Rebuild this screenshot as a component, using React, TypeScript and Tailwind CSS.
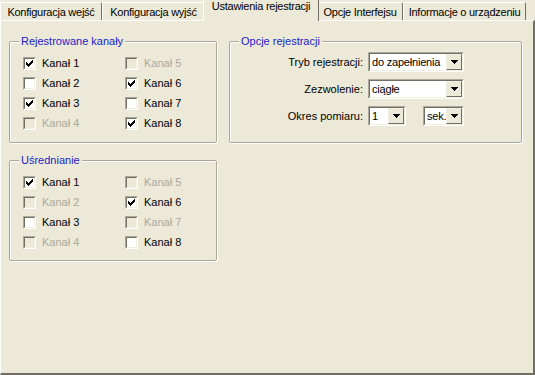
import React from 'react';

type Item = { label: string; checked?: boolean; disabled?: boolean };

const tabs = [
  { label: 'Konfiguracja wejść', w: 'w-[102px]' },
  { label: 'Konfiguracja wyjść', w: 'w-[103px]' },
  { label: 'Ustawienia rejestracji', w: 'w-[110px]', active: true },
  { label: 'Opcje Interfejsu', w: 'w-[86px]' },
  { label: 'Informacje o urządzeniu', w: 'w-[123px]' },
];

const recorded: Item[] = [
  { label: 'Kanał 1', checked: true },
  { label: 'Kanał 2' },
  { label: 'Kanał 3', checked: true },
  { label: 'Kanał 4', disabled: true },
  { label: 'Kanał 5', disabled: true },
  { label: 'Kanał 6', checked: true },
  { label: 'Kanał 7' },
  { label: 'Kanał 8', checked: true },
];

const averaging: Item[] = [
  { label: 'Kanał 1', checked: true },
  { label: 'Kanał 2', disabled: true },
  { label: 'Kanał 3' },
  { label: 'Kanał 4', disabled: true },
  { label: 'Kanał 5', disabled: true },
  { label: 'Kanał 6', checked: true },
  { label: 'Kanał 7', disabled: true },
  { label: 'Kanał 8' },
];

function CheckMark() {
  // classic 7x7 pixel check
  const cols = [2, 3, 4, 3, 2, 1, 0];
  return (
    <svg width="7" height="7" viewBox="0 0 7 7" shapeRendering="crispEdges">
      {cols.map((y, x) => (
        <rect key={x} x={x} y={y} width="1" height="3" fill="#000" />
      ))}
    </svg>
  );
}

function Check({ item }: { item: Item }) {
  return (
    <div className="flex items-center h-[20px]">
      <div className="w-[13px] h-[13px] border border-t-[#aca899] border-l-[#aca899] border-r-white border-b-white">
        <div className={`w-full h-full border border-t-[#716f64] border-l-[#716f64] border-r-[#f1efe2] border-b-[#f1efe2] flex items-center justify-center ${item.disabled ? 'bg-[#ece9d8]' : 'bg-white'}`}>
          {item.checked && <CheckMark />}
        </div>
      </div>
      <span className={`ml-[6px] whitespace-nowrap ${item.disabled ? 'text-[#aca899]' : 'text-black'}`}>{item.label}</span>
    </div>
  );
}

function Group({ title, className, children }: { title: string; className: string; children: React.ReactNode }) {
  return (
    <div className={`relative border border-[#aca899] shadow-[1px_1px_0_#fff,inset_1px_1px_0_#fff] rounded-[2px] ${className}`}>
      <span className="absolute top-[-7px] left-[9px] px-[2px] bg-[#ece9d8] text-[#1c1cc8] whitespace-nowrap leading-[13px]">{title}</span>
      {children}
    </div>
  );
}

function Checks({ items }: { items: Item[] }) {
  return (
    <div className="grid grid-flow-col grid-rows-4 grid-cols-[102px_90px] pl-[13px] pt-[11px]">
      {items.map((it, i) => <Check key={i} item={it} />)}
    </div>
  );
}

function Combo({ value, w }: { value: string; w: string }) {
  return (
    <div className={`${w} h-[20px] border border-t-[#aca899] border-l-[#aca899] border-r-white border-b-white`}>
      <div className="h-full border border-t-[#716f64] border-l-[#716f64] border-r-[#f1efe2] border-b-[#f1efe2] bg-white flex items-center">
        <span className="flex-1 pl-[2px] whitespace-nowrap overflow-hidden tracking-[-0.2px]">{value}</span>
        <div className="w-[16px] h-[16px] shrink-0 bg-[#ece9d8] border border-t-[#f1efe2] border-l-[#f1efe2] border-r-[#716f64] border-b-[#716f64] flex items-center justify-center">
          <svg width="7" height="4" viewBox="0 0 7 4" shapeRendering="crispEdges">
            <path d="M0 0h7v1h-1v1h-1v1h-1v1h-1v-1h-1v-1h-1v-1h-1z" fill="#000" />
          </svg>
        </div>
      </div>
    </div>
  );
}

function Row({ label, children }: { label: string; children: React.ReactNode }) {
  return (
    <div className="flex items-center h-[20px]">
      <span className="w-[134px] text-right pr-[1px] whitespace-nowrap">{label}</span>
      <div className="ml-[4px] flex items-center">{children}</div>
    </div>
  );
}

export default function App() {
  return (
    <div className="w-[535px] h-[375px] bg-[#ece9d8] text-[11px] leading-[13px] text-black overflow-hidden" style={{ fontFamily: '"Liberation Sans", Arial, sans-serif' }}>
      <div className="flex items-end h-[20px] tracking-[-0.25px]">
        {tabs.map((t) =>
          t.active ? (
            <div key={t.label} className={`${t.w} h-[21px] -mb-[1px] -mx-[2px] box-content px-[2px] relative z-10 bg-[#ece9d8] border-l border-t border-white border-r border-r-[#716f64] rounded-t-[2px] pt-[2px] text-center whitespace-nowrap`}>
              {t.label}
            </div>
          ) : (
            <div key={t.label} className={`${t.w} h-[18px] bg-[#ece9d8] border-l border-t border-white border-r border-r-[#716f64] rounded-t-[2px] pt-[3px] text-center whitespace-nowrap`}>
              {t.label}
            </div>
          )
        )}
      </div>
      <div className="h-[355px] border-l border-t border-white border-r-2 border-b-2 border-r-[#716f64] border-b-[#716f64] flex gap-[12px] pl-[8px] pt-[20px]">
        <div className="flex flex-col gap-[17px]">
          <Group title="Rejestrowane kanały" className="w-[208px] h-[102px]">
            <Checks items={recorded} />
          </Group>
          <Group title="Uśrednianie" className="w-[208px] h-[101px]">
            <Checks items={averaging} />
          </Group>
        </div>
        <Group title="Opcje rejestracji" className="w-[293px] h-[102px]">
          <div className="flex flex-col gap-[7px] pt-[10px]">
            <Row label="Tryb rejestracji:">
              <Combo value="do zapełnienia" w="w-[96px]" />
            </Row>
            <Row label="Zezwolenie:">
              <Combo value="ciągłe" w="w-[96px]" />
            </Row>
            <Row label="Okres pomiaru:">
              <Combo value="1" w="w-[38px]" />
              <div className="ml-[17px]">
                <Combo value="sek." w="w-[41px]" />
              </div>
            </Row>
          </div>
        </Group>
      </div>
    </div>
  );
}
